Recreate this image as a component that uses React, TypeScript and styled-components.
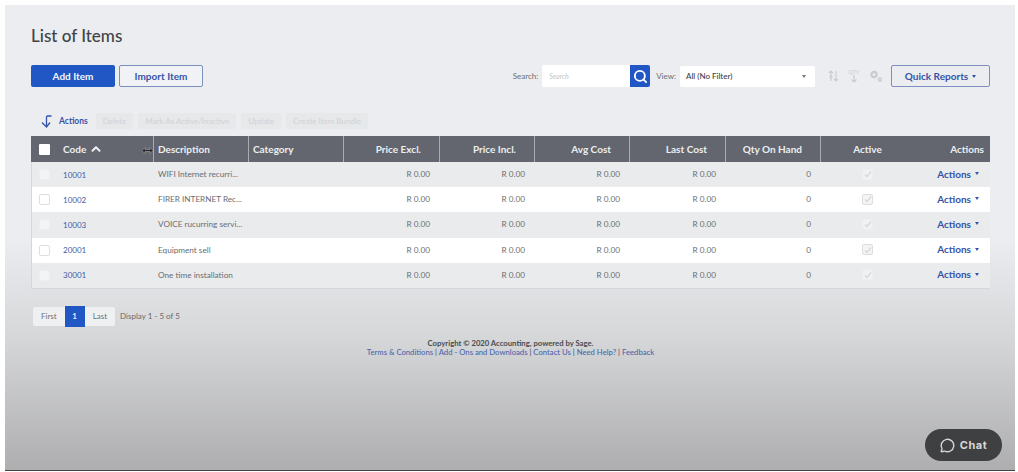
import React from 'react'
import styled, { createGlobalStyle } from 'styled-components'
import { Search, ChevronUp, MessageCircle } from 'lucide-react'

const rows = [
  { code: '10001', description: 'WIFI Internet recurri...' },
  { code: '10002', description: 'FIRER INTERNET Rec...' },
  { code: '10003', description: 'VOICE rucurring servi...' },
  { code: '20001', description: 'Equipment sell' },
  { code: '30001', description: 'One time installation' }
]

const columns = '95px 95px 96px 95px 95px 96px 95px 93px 1fr'

export default function App() {
  return (
    <>
      <GlobalStyle />
      <Page>
        <Title>List of Items</Title>
        <Toolbar>
          <PrimaryButton>Add Item</PrimaryButton>
          <OutlineButton>Import Item</OutlineButton>
          <ToolbarRight>
            <FieldLabel>Search:</FieldLabel>
            <SearchGroup>
              <SearchInput>Search</SearchInput>
              <SearchButton><Search size={15} strokeWidth={3} color="#fff" /></SearchButton>
            </SearchGroup>
            <FieldLabel>View:</FieldLabel>
            <ViewSelect>
              All (No Filter)
              <SmallCaret $color="#777" />
            </ViewSelect>
            <ToolIcons>
              <svg width="11" height="12" viewBox="0 0 11 12" fill="none" stroke="#c9cbce" strokeWidth="1.1">
                <path d="M3 11V1M1 3l2-2 2 2M8 1v10M6 9l2 2 2-2" />
                <path d="M1.5 6h3M1.5 8h3" />
              </svg>
              <svg width="12" height="14" viewBox="0 0 12 14" fill="none" stroke="#c9cbce">
                <text x="6" y="5" textAnchor="middle" fontSize="5.5" fill="#c9cbce" stroke="none">QTY</text>
                <path d="M6 6v7M3.5 10.5L6 13l2.5-2.5" strokeWidth="1.2" />
              </svg>
              <svg width="14" height="12" viewBox="0 0 14 12" fill="none" stroke="#c9cbce">
                <circle cx="5" cy="4.5" r="2.6" strokeWidth="2.2" />
                <circle cx="11" cy="9.5" r="1.5" strokeWidth="1.4" />
              </svg>
            </ToolIcons>
            <ReportsButton>
              Quick Reports
              <SmallCaret $color="#3554a8" />
            </ReportsButton>
          </ToolbarRight>
        </Toolbar>
        <BulkBar>
          <svg width="11" height="13" viewBox="0 0 11 13" fill="none" stroke="#3554a8" strokeWidth="1.3">
            <path d="M10.5 1H6.5Q5.5 1 5.5 2V12M1 7.5l4.5 4.5 3.5-4.5" />
          </svg>
          <BulkLabel>Actions</BulkLabel>
          <BulkButton>Delete</BulkButton>
          <BulkButton>Mark As Active/Inactive</BulkButton>
          <BulkButton>Update</BulkButton>
          <BulkButton>Create Item Bundle</BulkButton>
        </BulkBar>
        <Table>
          <HeaderRow>
            <HeaderCell $first>
              <HeaderCheck />
              Code
              <ChevronUp size={14} strokeWidth={3.5} />
              <ResizeCursor width="11" height="7" viewBox="0 0 11 7">
                <path d="M0 3.5L3 .5v2h5v-2l3 3-3 3v-2H3v2z" fill="#26282c" stroke="#d8d9db" strokeWidth=".4" />
              </ResizeCursor>
            </HeaderCell>
            <HeaderCell>Description</HeaderCell>
            <HeaderCell>Category</HeaderCell>
            <HeaderCell $align="right">Price Excl.</HeaderCell>
            <HeaderCell $align="right">Price Incl.</HeaderCell>
            <HeaderCell $align="right">Avg Cost</HeaderCell>
            <HeaderCell $align="right">Last Cost</HeaderCell>
            <HeaderCell $align="right">Qty On Hand</HeaderCell>
            <HeaderCell $align="center" $plain>Active</HeaderCell>
            <HeaderCell $align="right" $last>Actions</HeaderCell>
          </HeaderRow>
          {rows.map((row, i) => (
            <Row key={row.code} $odd={i % 2 === 0}>
              <Cell $first>
                <RowCheck $odd={i % 2 === 0} />
                <CodeLink>{row.code}</CodeLink>
              </Cell>
              <Cell>{row.description}</Cell>
              <Cell />
              <Cell $align="right">R 0.00</Cell>
              <Cell $align="right">R 0.00</Cell>
              <Cell $align="right">R 0.00</Cell>
              <Cell $align="right">R 0.00</Cell>
              <Cell $align="right">0</Cell>
              <Cell $align="center">
                <ActiveCheck $odd={i % 2 === 0}>
                  <svg width="8" height="8" viewBox="0 0 8 8" fill="none" stroke="#d6d8da" strokeWidth="1.3">
                    <path d="M1 4.5l2 2 4-5" />
                  </svg>
                </ActiveCheck>
              </Cell>
              <ActionsCell>
                Actions
                <SmallCaret $color="#3554a8" />
              </ActionsCell>
            </Row>
          ))}
        </Table>
        <Pager>
          <PagerButtons>
            <PagerLink>First</PagerLink>
            <PagerCurrent>1</PagerCurrent>
            <PagerLink>Last</PagerLink>
          </PagerButtons>
          <PagerText>Display 1 - 5 of 5</PagerText>
        </Pager>
        <Footer>
          <Copyright>Copyright © 2020 Accounting, powered by Sage.</Copyright>
          <FooterLinks>
            <a>Terms &amp; Conditions</a> | <a>Add - Ons and Downloads</a> | <a>Contact Us</a> | <a>Need Help?</a> | <a>Feedback</a>
          </FooterLinks>
        </Footer>
        <ChatButton>
          <MessageCircle size={15} strokeWidth={2.2} />
          Chat
        </ChatButton>
      </Page>
    </>
  )
}

const GlobalStyle = createGlobalStyle`
  html, body {
    margin: 0;
    background: #fff;
  }
  body {
    font-family: Lato, "Open Sans", sans-serif;
    overflow: hidden;
  }
`

const Page = styled.div`
  position: relative;
  box-sizing: border-box;
  width: 1010px;
  height: 466px;
  margin: 5px 0 0 5px;
  padding: 19px 25px 0 26px;
  background: linear-gradient(to bottom, #ebedf0 0%, #ebedf0 50%, #d5d6d8 72%, #aeaeb0 100%);
  border-bottom: 1px solid #444;
  overflow: hidden;
`

const Title = styled.h1`
  margin: 0;
  font-size: 17px;
  line-height: 24px;
  font-weight: 500;
  color: #404347;
`

const Toolbar = styled.div`
  display: flex;
  align-items: center;
  gap: 4px;
  margin-top: 17px;
`

const PrimaryButton = styled.div`
  box-sizing: border-box;
  width: 84px;
  height: 22px;
  line-height: 22px;
  text-align: center;
  font-size: 10px;
  font-weight: 700;
  color: #f2f5fb;
  background: #2157c4;
  border-radius: 2px;
`

const OutlineButton = styled.div`
  box-sizing: border-box;
  width: 84px;
  height: 22px;
  line-height: 20px;
  text-align: center;
  font-size: 10px;
  font-weight: 700;
  color: #3554a8;
  border: 1px solid #7d8fc0;
  border-radius: 2px;
  background: #f0f2f5;
`

const ToolbarRight = styled.div`
  display: flex;
  align-items: center;
  margin-left: auto;
`

const FieldLabel = styled.span`
  font-size: 8px;
  color: #6d7074;
  margin-right: 4px;
`

const SearchGroup = styled.div`
  display: flex;
  margin-right: 6px;
`

const SearchInput = styled.div`
  box-sizing: border-box;
  width: 88px;
  height: 22px;
  padding-left: 7px;
  line-height: 22px;
  font-size: 7px;
  font-style: italic;
  color: #c3c5c8;
  background: #fff;
  border-radius: 2px 0 0 2px;
`

const SearchButton = styled.div`
  display: flex;
  align-items: center;
  justify-content: center;
  width: 20px;
  height: 22px;
  background: #2157c4;
  border-radius: 0 2px 2px 0;
`

const ViewSelect = styled.div`
  display: flex;
  align-items: center;
  justify-content: space-between;
  box-sizing: border-box;
  width: 135px;
  height: 21px;
  padding: 0 9px 0 6px;
  font-size: 8px;
  font-weight: 500;
  color: #3d4044;
  background: #fff;
  border-radius: 2px;
`

const SmallCaret = styled.span<{ $color: string }>`
  display: inline-block;
  width: 0;
  height: 0;
  border-left: 2.5px solid transparent;
  border-right: 2.5px solid transparent;
  border-top: 3px solid ${({ $color }) => $color};
`

const ToolIcons = styled.div`
  display: flex;
  align-items: center;
  gap: 9px;
  width: 76px;
  padding-left: 13px;
  box-sizing: border-box;
`

const ReportsButton = styled.div`
  display: flex;
  align-items: center;
  justify-content: center;
  gap: 4px;
  box-sizing: border-box;
  width: 99px;
  height: 22px;
  font-size: 10px;
  font-weight: 700;
  color: #3554a8;
  border: 1px solid #7d8fc0;
  border-radius: 2px;
`

const BulkBar = styled.div`
  display: flex;
  align-items: center;
  height: 20px;
  margin-top: 24px;
  padding-left: 10px;
`

const BulkLabel = styled.span`
  margin: 0 8px 0 7px;
  font-size: 8.5px;
  font-weight: 700;
  color: #3554a8;
`

const BulkButton = styled.div`
  height: 16px;
  line-height: 16px;
  padding: 0 7px;
  margin-right: 5px;
  font-size: 8px;
  color: #d0d2d5;
  background: #e6e8ea;
  border-radius: 2px;
`

const Table = styled.div`
  margin-top: 5px;
  border-bottom: 1px solid #d4d6d9;
  border-left: 1px solid #d4d6d9;
  border-right: 1px solid #d4d6d9;
`

const HeaderRow = styled.div`
  display: grid;
  grid-template-columns: 123px ${columns};
  height: 26px;
  margin: 0 -1px;
  background: #63666e;
`

const HeaderCell = styled.div<{ $align?: string; $first?: boolean; $last?: boolean; $plain?: boolean }>`
  position: relative;
  display: flex;
  align-items: center;
  justify-content: ${({ $align }) =>
    $align === 'right' ? 'flex-end' : $align === 'center' ? 'center' : 'flex-start'};
  gap: 5px;
  box-sizing: border-box;
  padding: ${({ $first, $last, $plain }) =>
    $first ? '0 0 0 8px' : $last ? '0 6px 0 0' : $plain ? '0' : '0 18px 0 4px'};
  font-size: 10px;
  font-weight: 700;
  color: #eceef0;
  border-right: ${({ $last, $plain }) => ($last || $plain ? 'none' : '1px solid #a9abb0')};
  > svg:not(:last-child) {
    margin-left: -2px;
  }
`

const HeaderCheck = styled.span`
  width: 11px;
  height: 11px;
  margin-right: 8px;
  background: #fff;
  border-radius: 1px;
`

const ResizeCursor = styled.svg`
  position: absolute;
  right: 0;
  top: 11px;
`

const Row = styled.div<{ $odd: boolean }>`
  display: grid;
  grid-template-columns: 122px ${columns};
  height: 25.2px;
  margin-right: -1px;
  background: ${({ $odd }) => ($odd ? '#e9ebed' : '#fff')};
`

const Cell = styled.div<{ $align?: string; $first?: boolean }>`
  display: flex;
  align-items: center;
  justify-content: ${({ $align }) =>
    $align === 'right' ? 'flex-end' : $align === 'center' ? 'center' : 'flex-start'};
  box-sizing: border-box;
  padding: ${({ $first }) => ($first ? '0 0 0 7px' : '0 10px 1px 4px')};
  font-size: 8.2px;
  white-space: nowrap;
  color: #6a6d71;
`

const RowCheck = styled.span<{ $odd: boolean }>`
  box-sizing: border-box;
  width: 11px;
  height: 11px;
  margin-right: 13px;
  background: ${({ $odd }) => ($odd ? '#f3f4f5' : '#fff')};
  border: 1px solid ${({ $odd }) => ($odd ? '#eceef0' : '#dcdee0')};
  border-radius: 2px;
`

const CodeLink = styled.a`
  font-size: 8px;
  color: #3e5ca8;
`

const ActiveCheck = styled.span<{ $odd: boolean }>`
  display: flex;
  align-items: center;
  justify-content: center;
  box-sizing: border-box;
  width: 11px;
  height: 11px;
  margin-left: 6px;
  background: ${({ $odd }) => ($odd ? '#f0f1f3' : '#f4f4f5')};
  border: 1px solid ${({ $odd }) => ($odd ? '#eceef0' : '#dcdee0')};
  border-radius: 2px;
`

const ActionsCell = styled.div`
  display: flex;
  align-items: center;
  justify-content: flex-end;
  gap: 4px;
  padding: 0 11px 2px 0;
  font-size: 10px;
  font-weight: 700;
  color: #3554a8;
`

const Pager = styled.div`
  display: flex;
  align-items: center;
  margin: 18px 0 0 2px;
`

const PagerButtons = styled.div`
  display: flex;
  align-items: center;
  height: 19px;
  background: #eff0f1;
  border-radius: 2px;
  margin-right: 5px;
`

const PagerLink = styled.span`
  padding: 0 8px;
  font-size: 8px;
  color: #6d7074;
`

const PagerCurrent = styled.span`
  width: 20px;
  height: 21px;
  line-height: 21px;
  text-align: center;
  font-size: 8px;
  font-weight: 700;
  color: #e6ebf6;
  background: #2157c4;
`

const PagerText = styled.span`
  font-size: 8px;
  color: #66696d;
`

const Footer = styled.div`
  margin-top: 13px;
  text-align: center;
  font-size: 7.7px;
  line-height: 9px;
`

const Copyright = styled.div`
  font-weight: 700;
  color: #4a4c50;
`

const FooterLinks = styled.div`
  font-weight: 500;
  color: #4a4c50;
  a {
    color: #4a66ad;
  }
`

const ChatButton = styled.div`
  position: absolute;
  right: 13px;
  bottom: 9px;
  display: flex;
  align-items: center;
  justify-content: center;
  gap: 5px;
  width: 77px;
  height: 32px;
  font-family: Inter, sans-serif;
  font-size: 11px;
  font-weight: 700;
  letter-spacing: 0.5px;
  color: #d8d8d8;
  background: #3f4042;
  border-radius: 16px;
`
